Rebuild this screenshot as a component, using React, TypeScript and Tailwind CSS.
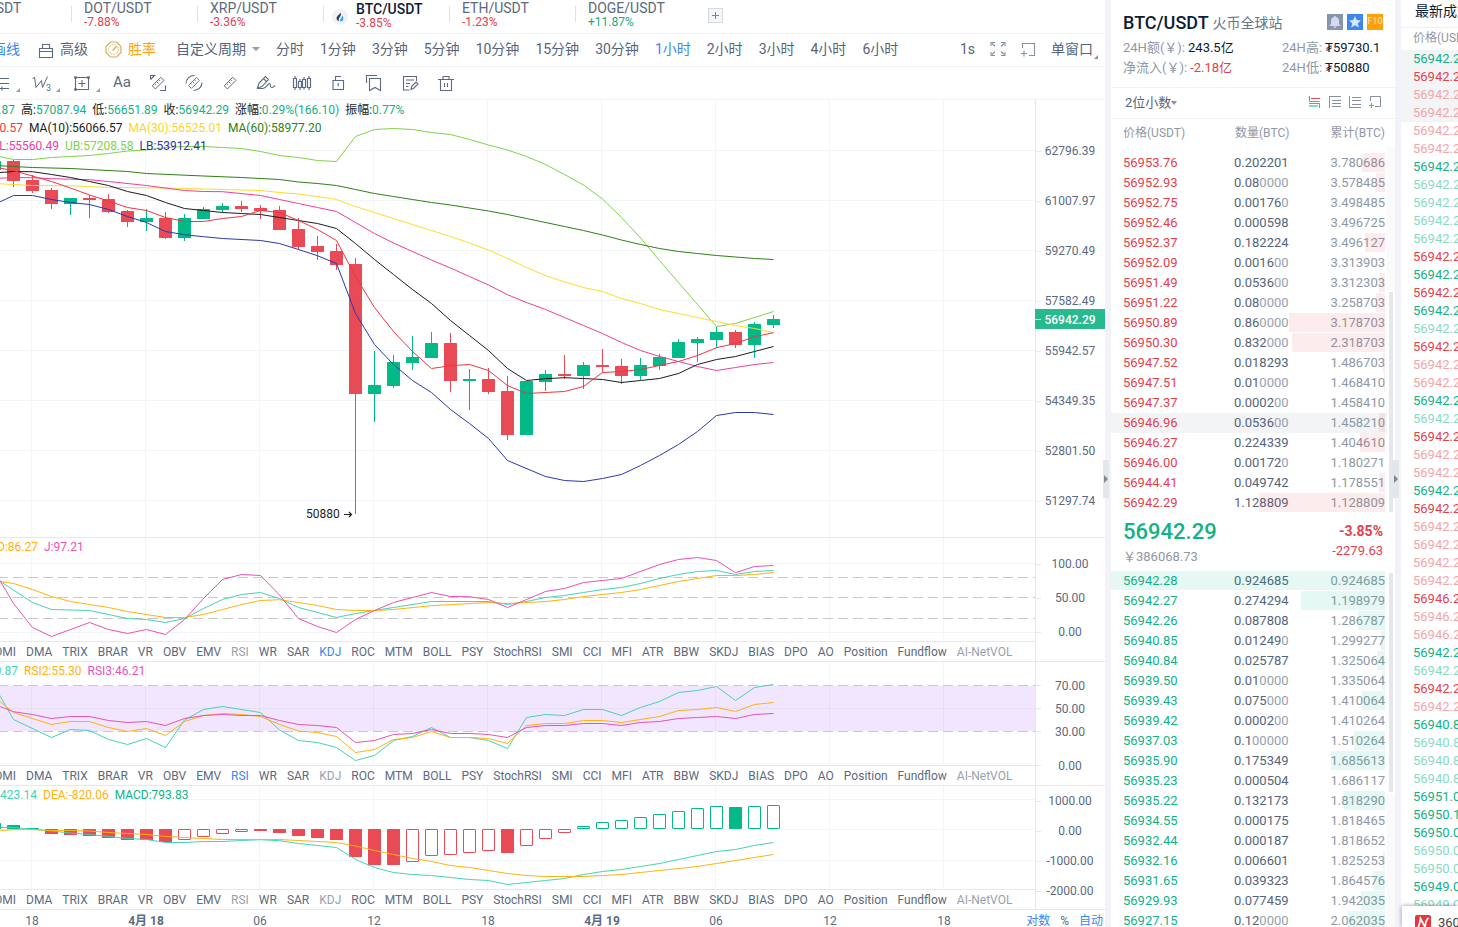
import React from 'react';

const GREEN = '#02b987';
const RED = '#e84b55';
const TEAL = '#45d3b5';
const ORANGE = '#ffb20d';
const PINK = '#e951b7';

const pairs = [
  { name: 'LTC/USDT', change: '-5.12%' },
  { name: 'DOT/USDT', change: '-7.88%' },
  { name: 'XRP/USDT', change: '-3.36%' },
  { name: 'BTC/USDT', change: '-3.85%', active: true },
  { name: 'ETH/USDT', change: '-1.23%' },
  { name: 'DOGE/USDT', change: '+11.87%' },
];

const periods = [
  '分时', '1分钟', '3分钟', '5分钟', '10分钟', '15分钟', '30分钟',
  '1小时', '2小时', '3小时', '4小时', '6小时',
];

const indicators = [
  'DMI', 'DMA', 'TRIX', 'BRAR', 'VR', 'OBV', 'EMV', 'RSI', 'WR', 'SAR', 'KDJ', 'ROC', 'MTM', 'BOLL', 'PSY',
  'StochRSI', 'SMI', 'CCI', 'MFI', 'ATR', 'BBW', 'SKDJ', 'BIAS', 'DPO', 'AO', 'Position', 'Fundflow', 'AI-NetVOL',
];

// up, wick top, body top, body bottom, wick bottom
const candles: [number, number, number, number, number][] = [
  [1, 161, 161, 170, 170],
  [0, 160, 161, 181, 187], [0, 175, 180, 191, 193], [0, 188, 190, 204, 209], [1, 198, 198, 204, 215],
  [0, 195, 198, 200, 218], [0, 194, 199, 212, 213], [0, 210, 211, 222, 227], [1, 209, 218, 222, 231],
  [0, 212, 218, 238, 239], [1, 214, 218, 238, 241], [1, 207, 209, 219, 219], [1, 203, 206, 210, 212],
  [0, 201, 206, 209, 212], [0, 205, 208, 211, 219], [0, 206, 210, 230, 230], [0, 218, 229, 247, 249],
  [0, 236, 246, 252, 260], [0, 244, 251, 265, 270], [0, 258, 264, 394, 514], [1, 351, 385, 394, 422],
  [1, 355, 362, 386, 388], [1, 336, 357, 363, 370], [1, 332, 343, 358, 358], [0, 333, 343, 381, 392],
  [1, 369, 379, 381, 410], [0, 368, 379, 392, 394], [0, 376, 391, 435, 440], [1, 381, 381, 435, 435],
  [1, 370, 374, 382, 391], [0, 355, 374, 376, 379], [1, 362, 365, 376, 389], [0, 349, 365, 367, 373],
  [0, 359, 366, 376, 384], [1, 358, 365, 376, 380], [1, 354, 357, 366, 370], [1, 339, 342, 358, 358],
  [1, 337, 339, 343, 362], [1, 327, 332, 340, 348], [0, 330, 332, 345, 348], [1, 322, 324, 345, 358],
  [1, 315, 319, 325, 328],
];

const mainLines = [
  { color: '#7ed348', points: '-6,155.5 13,159.5 32,159.5 51,157.5 70,156.5 89,155.5 108,153.5 127,151 146,150 165,147.5 184,146.5 203,146.5 222,147.5 241,148.5 260,151.5 279,155.5 298,157.5 317,160.5 336,161.5 355,136.5 374,129.5 393,128.5 412,129.5 431,132.5 450,134.5 469,139.5 488,145 507,150 526,156.5 545,164.5 564,174.5 583,185 602,199 621,217.5 640,238 659,260.5 678,282.5 697,304.5 716,326.5 735,323.5 754,317.5 773,311.5' },
  { color: '#2f8014', points: '-6,165.5 13,166.5 32,167.5 70,168.5 127,171.5 146,173.5 203,176 241,177.5 279,179.5 298,182 317,183.5 336,185.5 355,189.5 374,193.5 393,196.5 412,199.5 431,202.5 450,205 488,211 507,214.5 526,218.5 564,226.5 583,230.5 602,235 621,240 640,244.5 659,248.5 678,251.5 697,253.5 716,255.5 735,257 754,258.5 773,259.5' },
  { color: '#fddc2c', points: '-6,183.5 13,184.5 32,185.5 70,185.7 108,187.5 146,187.7 184,188.5 222,189.5 260,190.5 279,192.5 298,194 317,196.5 336,199.5 355,206.5 374,212.5 393,218.5 412,224.5 431,230.5 450,236.5 469,243 488,250 507,258.5 526,267.5 545,275.5 564,282 583,287.5 602,291.5 621,298.5 640,303.5 659,309.5 678,313.5 697,317.5 716,321.5 735,325.5 754,328.5 773,332.5' },
  { color: '#ec409e', points: '-6,178.5 13,177.5 32,177.7 51,178.7 89,179.7 108,181.5 146,185.5 184,190.5 203,191.5 222,191.7 260,195.5 279,199.5 298,203.5 317,207.5 336,211.5 355,222.5 374,233.5 393,243 412,251.5 431,260 450,268 469,276.5 488,285 507,294.7 526,302.5 545,309.5 564,317.5 583,325.5 602,333.5 621,342.5 640,350.5 659,356.5 678,361.5 697,366.5 716,370.5 735,367.5 754,364.5 773,362.5' },
  { color: '#1c1c1c', points: '-6,173 13,171.5 32,171.7 51,174.5 70,177.5 89,181.5 108,185.5 127,191.5 146,195.5 165,202.5 184,208.5 203,210.5 222,212.5 241,213.5 260,214.5 279,217.5 298,220.5 317,223.5 336,228.5 355,243.5 374,259.5 393,274.5 412,289.5 431,303.5 450,320.5 469,335.5 488,350.5 507,368.5 526,380.5 545,378.7 564,377.7 583,378.5 602,379.5 621,382.5 640,380.5 659,378.5 678,373.5 697,364.5 716,359.5 735,356.5 754,351.5 773,346.5' },
  { color: '#f3343f', points: '-6,167 13,170.7 32,176 51,181.5 70,188 89,195 108,201 127,207.5 146,210.5 165,217.5 184,221.5 203,221.5 222,218.5 241,216.5 260,210.5 279,212.5 298,220.5 317,229.5 336,240.5 355,276.5 374,307.5 393,331.5 412,351.5 431,368.5 450,365.7 469,364.5 488,370.5 507,385.5 526,393.5 564,391.5 583,386.5 602,372.5 621,371.5 640,369.5 659,365.5 678,361.5 697,355.5 716,347.7 735,343.5 754,336.7 773,332.7' },
  { color: '#2b39a8', points: '-6,204.5 13,195.5 32,195.5 51,199.5 70,202.5 89,204.5 108,209.5 127,216.5 146,222.5 165,231.5 184,234.7 203,236.7 222,238.5 260,240.5 279,243.5 298,249.5 317,255.7 336,263.5 355,313.5 374,344.5 393,364.5 412,380.5 431,392.5 450,409.5 469,423.5 488,438.5 507,460.5 545,476.5 564,480.5 583,481.5 602,478.5 621,474.5 640,465.5 659,455.5 678,444.5 697,431.5 716,415.5 735,412.5 754,412.5 773,414.5' },
];

const kdjLines = [
  { color: TEAL, points: '-6,575 0,581.5 13,590 32,602.5 51,609.5 89,610.5 127,618.5 146,619.5 165,622.5 184,618.5 203,608.5 222,599.5 241,594.5 260,592.5 279,598.5 298,607.5 336,617.5 355,613.5 374,610.5 393,607.5 431,601.5 488,601.5 507,604.5 526,601.5 545,597.5 564,595.5 583,592.5 602,589.5 621,587.5 640,583.5 659,578.5 678,574.5 697,571.5 716,570.5 735,574.5 754,571.5 773,570.5' },
  { color: ORANGE, points: '-6,581.5 0,581.7 13,583.5 32,589.5 51,596.5 70,601.5 89,604.5 108,607.5 127,611.5 146,614.5 165,617.5 184,617.5 203,614.5 222,609.5 241,604.5 260,600.5 279,599.7 298,602.5 317,605.5 336,609.5 355,610.5 374,610.5 393,609.5 431,605.7 488,602.5 507,603.5 545,601.5 564,599.5 583,596.5 602,594.5 621,592.5 640,589.5 659,585.5 678,581.5 697,578.5 716,575.5 735,575.5 754,574.5 773,572.5' },
  { color: PINK, points: '-6,572 0,581.5 13,603.5 32,627.5 51,636.5 89,622.5 108,629.5 127,633.5 146,629.5 165,634.5 184,619.5 203,598.5 222,579.5 241,574.5 260,575.5 279,595 298,618.5 317,626.5 336,632.5 355,619.5 374,610.5 393,602.5 412,597.5 431,592.5 450,596.5 469,596.7 488,599.5 507,607.5 526,599.5 545,591.5 564,588.5 583,582.5 602,580.5 621,578.5 640,571.5 659,564.5 678,559.5 697,557.5 716,560.5 735,572.7 754,566.5 773,565.5' },
];

const rsiLines = [
  { color: TEAL, points: '-6,686 0,696.7 13,719.5 51,737.5 70,729.5 89,730.5 108,739.5 127,744.5 146,738.5 165,747.5 184,720 203,709.5 222,706.5 260,712.5 279,730 298,740.5 317,742.5 336,747.5 355,760.5 374,755.5 393,740.5 412,736.5 431,727.5 450,737.5 469,737.5 488,740.5 507,748.5 526,717.5 545,714.5 564,715.5 583,709.5 602,709.5 621,715.5 640,707.5 659,701.5 678,692.5 697,690.5 716,686.5 735,700.5 754,687.5 773,684.5' },
  { color: ORANGE, points: '-6,697 0,702 13,712.5 32,718.5 51,724.5 70,721.5 89,721.5 108,727.5 127,731.5 146,728.5 165,735.5 184,721.5 203,715.5 222,713.5 241,714.5 260,716.5 279,724.5 298,731 317,732.5 336,736.5 355,752.5 374,749.5 393,739.5 412,737.5 431,731.5 450,737.5 469,737.5 488,738.5 507,743.5 526,725.5 545,723.5 564,723.5 583,720.5 602,720.5 621,722.5 640,719.5 659,716.5 678,710.5 697,709.5 716,707.5 735,711.5 754,704.5 773,702.5' },
  { color: PINK, points: '-6,704.5 0,706.7 13,711.7 32,714.5 51,718.5 70,716.5 89,716.5 108,720.5 127,722.5 146,721.5 165,725.5 184,718.5 203,715.5 222,714.5 241,715.5 260,715.5 279,720.5 298,724.5 317,725.5 336,727.5 355,742.5 374,740.5 393,734.5 412,733.5 431,729.5 450,733.5 469,733.5 488,734.5 507,737.5 526,727.5 545,725.5 564,725.5 583,723.5 602,723.5 621,725.5 640,722.5 659,721.5 678,718.5 697,717.5 716,716.5 735,718.5 754,714.5 773,713.5' },
];

const macdLines = [
  { color: TEAL, points: '-6,826.5 0,827.5 13,827.5 32,829.3 51,831 70,833 89,834.5 108,836.5 127,838.5 146,839.5 165,842.5 184,842.5 203,841.5 222,841.5 241,840.5 260,839.7 279,840.7 298,843.5 317,845.5 336,847.5 355,859.5 374,867.5 393,872.5 412,874.5 431,875.5 450,877.5 469,879.5 488,880.5 507,884.5 526,882.5 545,880.5 564,878.5 583,874.5 602,871.5 621,869.5 640,866.5 659,863.5 678,859.5 697,855.5 716,851.5 735,849.5 754,845.5 773,842.5' },
  { color: ORANGE, points: '-6,830.5 0,830.5 13,829.7 32,829.5 51,830.5 70,830.5 89,831 108,832.5 127,833.5 146,834.5 165,836.5 184,837.5 203,838.5 222,839.5 279,839.5 298,840.5 336,842.5 355,846 374,850.5 393,854.5 412,858.5 431,861.5 450,865.5 469,867.5 488,870.5 507,873.5 526,875.5 545,876.5 583,876.5 602,875.5 621,874.5 640,872.5 659,870.5 678,868.5 697,866.5 716,863.5 735,860.5 754,857.5 773,854.5' },
];

const macdBars: [number, boolean][] = [
  [6, false], [4, false], [1, false], [-5, false], [-6, false], [-7, false], [-9, false], [-11, false], [-11, false],
  [-13, false], [-11, true], [-8, true], [-5, true], [-3, true], [-2, false], [-4, false], [-7, false],
  [-9, false], [-11, false], [-28, false], [-36, false], [-36, false], [-33, true], [-27, true], [-26, true],
  [-24, true], [-22, true], [-24, false], [-17, true], [-10, true], [-4, true], [3, true], [7, true],
  [9, true], [12, true], [15, true], [18, true], [21, true], [23, true], [22, false], [23, true], [24, true],
];

const asks = [
  ['56953.76', '0.202201', '3.780686'],
  ['56952.93', '0.080000', '3.578485'],
  ['56952.75', '0.001760', '3.498485'],
  ['56952.46', '0.000598', '3.496725'],
  ['56952.37', '0.182224', '3.496127'],
  ['56952.09', '0.001600', '3.313903'],
  ['56951.49', '0.053600', '3.312303'],
  ['56951.22', '0.080000', '3.258703'],
  ['56950.89', '0.860000', '3.178703'],
  ['56950.30', '0.832000', '2.318703'],
  ['56947.52', '0.018293', '1.486703'],
  ['56947.51', '0.010000', '1.468410'],
  ['56947.37', '0.000200', '1.458410'],
  ['56946.96', '0.053600', '1.458210'],
  ['56946.27', '0.224339', '1.404610'],
  ['56946.00', '0.001720', '1.180271'],
  ['56944.41', '0.049742', '1.178551'],
  ['56942.29', '1.128809', '1.128809'],
];

const bids = [
  ['56942.28', '0.924685', '0.924685'],
  ['56942.27', '0.274294', '1.198979'],
  ['56942.26', '0.087808', '1.286787'],
  ['56940.85', '0.012490', '1.299277'],
  ['56940.84', '0.025787', '1.325064'],
  ['56939.50', '0.010000', '1.335064'],
  ['56939.43', '0.075000', '1.410064'],
  ['56939.42', '0.000200', '1.410264'],
  ['56937.03', '0.100000', '1.510264'],
  ['56935.90', '0.175349', '1.685613'],
  ['56935.23', '0.000504', '1.686117'],
  ['56935.22', '0.132173', '1.818290'],
  ['56934.55', '0.000175', '1.818465'],
  ['56932.44', '0.000187', '1.818652'],
  ['56932.16', '0.006601', '1.825253'],
  ['56931.65', '0.039323', '1.864576'],
  ['56929.93', '0.077459', '1.942035'],
  ['56927.15', '0.120000', '2.062035'],
];

// G / R are fresh trades, g / r are repeated at the same price
const trades: [string, string][] = [
  ['56942.2', 'GRrrrrGggggRGRGgRrrGgRrrGRrrrr'],
  ['56946.2', 'Rrr'],
  ['56942.2', 'GgRr'],
  ['56940.8', 'Gggg'],
  ['56951.0', 'G'],
  ['56950.1', 'G'],
  ['56950.0', 'Ggg'],
  ['56949.0', 'Gg'],
];

const tradeColors: Record<string, string> = {
  G: 'text-[#10b286]',
  R: 'text-[#e5404b]',
  g: 'text-[#86dcc3]',
  r: 'text-[#f3a5aa]',
};

const gridX = [31, 145, 259, 373, 487, 601, 715, 829, 943];

const Grid = ({ top, height, rows }: { top: number; height: number; rows: number[] }) => (
  <g fill="#f1f5f8">
    {gridX.map((x) => (
      <rect key={x} x={x} y={top} width="1" height={height} />
    ))}
    {rows.map((y) => (
      <rect key={y} x="0" y={y} width="1035" height="1" />
    ))}
  </g>
);

const Dashes = ({ rows }: { rows: number[] }) => (
  <g stroke="#c9c9c9" strokeDasharray="10 5">
    {rows.map((y) => (
      <line key={y} x1="-2" x2="1035" y1={y + 0.5} y2={y + 0.5} />
    ))}
  </g>
);

const Lines = ({ lines }: { lines: { color: string; points: string }[] }) => (
  <g fill="none" strokeWidth="1" strokeLinejoin="round">
    {lines.map((line) => (
      <polyline key={line.color} points={line.points} stroke={line.color} transform="translate(0.5 0)" />
    ))}
  </g>
);

const Legend = ({ items }: { items: { text: string; color: string; first?: string }[] }) => (
  <div className="flex h-[18px] items-center gap-[6px] whitespace-nowrap">
    {items.map((item) => (
      <span key={item.text} className={`${item.color} ${item.first ? `flex justify-end ${item.first}` : ''}`}>
        {item.text}
      </span>
    ))}
  </div>
);

const AxisLabel = ({ text, height }: { text: string; height: string }) => (
  <div className={`flex items-center ${height}`}>
    <span className="h-px w-[5px] bg-[#e6e9ec]" />
    <span className="flex-1 pr-[6px] text-center">{text}</span>
  </div>
);

const IndicatorTabs = ({ active, used }: { active?: string; used: string[] }) => (
  <nav className="flex h-[20px] items-center gap-[10px] overflow-hidden border-t border-[#e6e8eb] whitespace-nowrap">
    {indicators.map((name, i) => (
      <button
        key={name}
        className={`${i === 0 ? 'flex w-4 justify-end' : ''} ${
          name === active ? 'text-[#3c86ee]' : used.includes(name) ? 'text-[#98a1ae]' : 'text-[#5b6a80]'
        }`}
      >
        {name}
      </button>
    ))}
  </nav>
);

const Icon = ({ children }: { children: React.ReactNode }) => (
  <svg className="h-[18px] w-[18px]" viewBox="0 0 18 18" fill="none" stroke="#5b6a80" strokeWidth="1.1">
    {children}
  </svg>
);

const ruler = <path d="M2.500 12 12 2.500 15.500 6 6 15.500ZM5 9.500l1.500 1.500M7.200 7.300l2.200 2.200M9.400 5.100l1.500 1.500" />;

const drawTools = [
  {
    name: '线段',
    more: true,
    icon: <Icon><path d="M0 4.5h16M0 9.5h16M0 14.5h16M5 2.5v4M9 12.5v4" /></Icon>,
  },
  {
    name: '波浪',
    more: true,
    icon: (
      <svg className="h-[18px] w-5" viewBox="0 0 20 18" fill="none" stroke="#5b6a80" strokeWidth="1">
        <path d="M.5 5 2.500 3 4 13.500 9.500 6.500 10.500 13.500 15.500 2.500" />
        <text x="14" y="16.500" fontSize="9" fill="#5b6a80" stroke="none">3</text>
      </svg>
    ),
  },
  {
    name: '图形',
    more: true,
    icon: (
      <Icon>
        <path d="M2.500 3.500h13v12h-13zM9 6v7M5.500 9.500h7" />
        <path d="M1.500 2.500h2v2h-2zM14.500 2.500h2v2h-2zM1.500 14.500h2v2h-2z" fill="#5b6a80" strokeWidth="0.5" />
      </Icon>
    ),
  },
  { name: '文字', icon: <span className="text-[15px] text-[#5b6a80]">Aa</span> },
  {
    name: '测量',
    icon: <Icon><g transform="translate(1 1) scale(.9)">{ruler}</g><path d="M1.500 5.500V1.500H6.500M1.500 5.500 5.500 1.500M16.500 11.500v5H11" /></Icon>,
  },
  {
    name: '区间统计',
    icon: <Icon><g transform="translate(1.5 1.5) scale(.83)">{ruler}</g><path d="M1 9.500C1 5 4.500 1.500 9.500 1.500M17 8.500C17 13 13.500 16.500 8.500 16.500" /></Icon>,
  },
  { name: '尺子', icon: <Icon><g transform="translate(1 1) scale(.9)">{ruler}</g></Icon> },
  {
    name: '画笔',
    icon: (
      <svg className="h-[18px] w-5" viewBox="0 0 20 18" fill="none" stroke="#5b6a80" strokeWidth="1.1">
        <path d="M1.500 14 3 9 9.500 2.500 12.500 5.500 6 12.500ZM7.500 4.500 10.500 7.500M1 14.500h6c3 0 5-5 6.500-5s0 4 2 4 2.500-1 3.500-2" />
      </svg>
    ),
  },
  {
    name: 'K线形态',
    icon: (
      <svg className="h-[18px] w-5" viewBox="0 0 20 18" fill="none" stroke="#5b6a80" strokeWidth="1.2">
        <path d="M1.500 4.500h3v9h-3zM3 2v2.500M3 13.500V16M6.500 7.500h3v6h-3zM8 5v2.500M8 13.500V16M10.500 5.500h3v8h-3zM12 3v2.500M12 13.500v2M15.500 4.500h3v9h-3zM17 2v2.500M17 13.500V16" />
      </svg>
    ),
  },
  { name: '锁定', icon: <Icon><path d="M4 6.500h10.500v9H4zM6.500 6.500v-4h5.500M9.200 9v3.500" /></Icon> },
  { name: '收藏', icon: <Icon><path d="M1.500 9V1.500H12M4.500 4.500h11v12l-5.500-3-5.500 3z" /></Icon> },
  { name: '备注', icon: <Icon><path d="M8.500 16h-6V2.500h13V7M5 6h8M5 9.500h4M5 12.500h2.500M10 15.500l.5-3L15 8l2 2-4.500 4.500z" /></Icon> },
  { name: '删除', icon: <Icon><path d="M1 5.500h16M6 5.500v-3h6v3M3.500 5.500v11h11v-11M7.500 9v4M10.500 9v4" /></Icon> },
];

const Header = () => (
  <header>
    {/* Pair tabs */}
    <div className="-ml-[55px] flex h-[34px] border-b border-[#eff1f3]">
      {pairs.map((pair) => (
        <a key={pair.name} href={`#${pair.name}`} className="relative flex w-[126px] items-center">
          <span className="absolute top-[6px] left-0 h-4 w-px bg-[#dfe3e8]" />
          {pair.active && (
            <svg className="ml-[9px] h-4 w-4" viewBox="0 0 16 16">
              <circle cx="8" cy="8" r="8" fill="#f1f2f4" />
              <path d="M8 3.500C10 5.500 8.500 7 7.300 8.700 6.500 10 6.500 11 7.200 12.300 3.500 11 4.300 7.500 6.500 6 7.500 5.200 8 4.500 8 3.500Z" fill="#2f3a66" />
              <path d="M10.300 6.500C12 8.500 12 12 8.500 12.500 7 11 9.800 9.500 10.300 6.500Z" fill="#2ba3ea" />
            </svg>
          )}
          <span className={`flex flex-col ${pair.active ? 'ml-2' : 'ml-[13px]'}`}>
            <span
              className={`text-sm ${
                pair.active ? 'leading-4 font-medium text-[#0b1d38]' : 'leading-[14px] text-[#5b6a80]'
              }`}
            >
              {pair.name}
            </span>
            <span
              className={`text-xs ${pair.active ? 'pb-[3px] leading-3' : 'pb-[3px] leading-[14px]'} ${
                pair.change.startsWith('+') ? 'text-[#12ad80]' : 'text-[#e5404b]'
              }`}
            >
              {pair.change}
            </span>
          </span>
        </a>
      ))}
      <button
        aria-label="添加"
        className="mt-2 ml-[7px] flex h-[15px] w-[15px] items-center justify-center border border-[#d5dadf] bg-[#f4f6f8]"
      >
        <svg className="h-[7px] w-[7px]" viewBox="0 0 7 7" fill="#7d8896">
          <path d="M3 0h1v7H3zM0 3h7v1H0z" />
        </svg>
      </button>
    </div>

    {/* Periods */}
    <div className="flex h-[33px] items-center border-b border-[#eff1f3] pb-[2px] text-sm whitespace-nowrap text-[#56647a]">
      <button className="flex w-5 justify-end text-[#3c86ee]">画线</button>
      <button className="ml-[18px] flex items-center gap-[6px]">
        <svg className="mt-1 h-4 w-4" viewBox="0 0 16 16" fill="none" stroke="#5b6a80" strokeWidth="1.1">
          <path d="M1.500 5.500h13v9h-13zM1.500 8.500h13M4.500 5.500v-4h7v4" />
        </svg>
        高级
      </button>
      <button className="ml-[17px] flex items-center gap-[6px] text-[#ffa40f]">
        <svg className="h-[17px] w-[17px]" viewBox="0 0 17 17" fill="none" stroke="#e0ad5b" strokeWidth="1.200">
          <path d="M5.500 1h6L16 5.500v6L11.500 16h-6L1 11.500v-6z" />
          <circle cx="8.500" cy="8.500" r="5" strokeWidth="0.8" strokeDasharray="2 1" />
          <path d="M7.500 9.500 11.500 5.500" strokeWidth="1.500" />
        </svg>
        胜率
      </button>
      <button className="ml-5 flex items-center gap-[6px]">
        自定义周期
        <svg className="h-1 w-2" viewBox="0 0 8 4" fill="#929ba8"><path d="M0 0h8L4 4z" /></svg>
      </button>
      <div className="ml-4 flex gap-4">
        {periods.map((period) => (
          <button key={period} className={period === '1小时' ? 'text-[#3c86ee]' : ''}>
            {period}
          </button>
        ))}
      </div>
      <div className="ml-auto flex items-center gap-[15px]">
        <button>1s</button>
        <button aria-label="全屏">
          <svg className="h-4 w-4" viewBox="0 0 16 16" fill="none" stroke="#8590a0" strokeWidth="1.1">
            <path d="M1 5V1.500h4M2 2.500l3 3M11 1.500h4V5M14 2.500l-3 3M1 11v3.500h4M2 13.500l3-3M11 14.500h4V11M14 13.500l-3-3" />
          </svg>
        </button>
        <button aria-label="新窗口">
          <svg className="h-[15px] w-[15px]" viewBox="0 0 15 15" fill="none" stroke="#8590a0" strokeWidth="1.1">
            <path d="M1.500 6V1.500h12v12H8M0 11.500h6M3 8.500v6" />
          </svg>
        </button>
        <button className="relative pr-[12px]">
          单窗口
          <span className="absolute right-[7px] bottom-0 border-b-4 border-l-4 border-b-[#8590a0] border-l-transparent" />
        </button>
      </div>
    </div>

    {/* Drawing tools */}
    <div className="-ml-4 flex h-[33px] items-center border-b border-[#eff1f3]">
      {drawTools.map((tool) => (
        <button key={tool.name} aria-label={tool.name} className={`relative flex h-8 ${tool.more ? 'w-10' : 'w-9'}`}>
          <span className="flex w-9 items-center justify-center self-center">{tool.icon}</span>
          {tool.more && (
            <span className="absolute right-1 bottom-[7px] border-b-4 border-l-4 border-b-[#929ba8] border-l-transparent" />
          )}
        </button>
      ))}
    </div>
  </header>
);

const PriceChart = () => (
  <section className="flex min-h-0 flex-1 overflow-hidden border-b border-[#e6e8eb]">
    <div className="relative min-w-0 flex-1">
      <svg className="h-[437px] w-full" viewBox="0 100 1035 437" preserveAspectRatio="none">
        <Grid top={100} height={437} rows={[150, 200, 250, 300, 350, 400, 450, 500]} />
        {candles.map(([up, high, top, bottom, low], i) => (
          <g key={i} fill={up ? GREEN : RED}>
            <rect x={-6 + i * 19} y={high} width="1" height={low - high} />
            <rect x={-12 + i * 19} y={top} width="13" height={bottom - top} rx="0.5" />
          </g>
        ))}
        <Lines lines={mainLines} />
        <text x="306" y="518" fontSize="12" fill="#222">50880</text>
        <path d="M344 514.500h7.500M349 512l2.500 2.500-2.500 2.500" stroke="#222" strokeWidth="1.2" fill="none" />
      </svg>
      <div className="absolute top-px left-0">
        <div className="flex h-[18px] items-center gap-[6px] whitespace-nowrap text-[#222]">
          <span className="flex w-[15px] justify-end"><span>开:<b className="font-normal text-[#10b286]">56775.87</b></span></span>
          {[
            ['高', '57087.94'], ['低', '56651.89'], ['收', '56942.29'], ['涨幅', '0.29%(166.10)'], ['振幅', '0.77%'],
          ].map(([label, value]) => (
            <span key={label}>{label}:<b className="font-normal text-[#10b286]">{value}</b></span>
          ))}
        </div>
        <Legend
          items={[
            { text: 'MA(5):56560.57', color: 'text-[#f3343f]', first: 'w-[23px]' },
            { text: 'MA(10):56066.57', color: 'text-[#1c1c1c]' },
            { text: 'MA(30):56525.01', color: 'text-[#fdd61a]' },
            { text: 'MA(60):58977.20', color: 'text-[#2f8014]' },
          ]}
        />
        <Legend
          items={[
            { text: 'BOLL:55560.49', color: 'text-[#ec409e]', first: 'w-[59px]' },
            { text: 'UB:57208.58', color: 'text-[#7ed348]' },
            { text: 'LB:53912.41', color: 'text-[#2b39a8]' },
          ]}
        />
      </div>
    </div>
    <div className="relative w-[70px] border-l border-[#e6e8eb] pt-[26px]">
      {['62796.39', '61007.97', '59270.49', '57582.49', '55942.57', '54349.35', '52801.50', '51297.74'].map((price) => (
        <AxisLabel key={price} text={price} height="h-[50px]" />
      ))}
      <div className="absolute top-[209px] right-0 -left-px flex h-5 items-center bg-[#29b98f] pt-px text-white">
        <span className="h-px w-[6px] bg-white/70" />
        <span className="flex-1 pr-[6px] text-center font-medium">56942.29</span>
      </div>
    </div>
  </section>
);

const IndicatorPanel = ({
  top, legend, active, used, axis, children,
}: {
  top: number;
  legend: React.ReactNode;
  active?: string;
  used: string[];
  axis: React.ReactNode;
  children: React.ReactNode;
}) => (
  <section className="flex h-[124px] border-b border-[#e6e8eb]">
    <div className="relative min-w-0 flex-1">
      <svg className="h-[103px] w-full" viewBox={`0 ${top} 1035 103`} preserveAspectRatio="none">
        {children}
      </svg>
      <div className="absolute top-0 left-0">{legend}</div>
      <IndicatorTabs active={active} used={used} />
    </div>
    <div className="w-[70px] border-l border-[#e6e8eb]">{axis}</div>
  </section>
);

const used = ['RSI', 'KDJ', 'AI-NetVOL'];

const Indicators = () => (
  <>
    <IndicatorPanel
      top={538}
      active="KDJ"
      used={used}
      legend={
        <Legend
          items={[
            { text: 'D:86.27', color: 'text-[#ffb20d]', first: 'w-[38px]' },
            { text: 'J:97.21', color: 'text-[#e951b7]' },
          ]}
        />
      }
      axis={
        <div className="pt-[9px]">
          {['100.00', '50.00', '0.00'].map((v) => <AxisLabel key={v} text={v} height="h-[34px]" />)}
        </div>
      }
    >
      <Grid top={538} height={103} rows={[563, 632]} />
      <Dashes rows={[577, 597, 618]} />
      <Lines lines={kdjLines} />
    </IndicatorPanel>

    <IndicatorPanel
      top={662}
      active="RSI"
      used={used}
      legend={
        <Legend
          items={[
            { text: 'RSI1:70.87', color: 'text-[#45d3b5]', first: 'w-[18px]' },
            { text: 'RSI2:55.30', color: 'text-[#ffb20d]' },
            { text: 'RSI3:46.21', color: 'text-[#e951b7]' },
          ]}
        />
      }
      axis={
        <div className="pt-3">
          {['70.00', '50.00', '30.00'].map((v) => <AxisLabel key={v} text={v} height="h-[23px]" />)}
          <div className="pt-[11px]"><AxisLabel text="0.00" height="h-[23px]" /></div>
        </div>
      }
    >
      <Grid top={662} height={103} rows={[708]} />
      <rect x="0" y="686" width="1035" height="45" fill="#a64df5" fillOpacity="0.14" />
      <Dashes rows={[685, 731]} />
      <Lines lines={rsiLines} />
    </IndicatorPanel>

    <IndicatorPanel
      top={786}
      used={used}
      legend={
        <Legend
          items={[
            { text: 'DIF:-423.14', color: 'text-[#45d3b5]', first: 'w-[37px]' },
            { text: 'DEA:-820.06', color: 'text-[#ffb20d]' },
            { text: 'MACD:793.83', color: 'text-[#10b286]' },
          ]}
        />
      }
      axis={
        <div>
          {['1000.00', '0.00', '-1000.00', '-2000.00'].map((v) => <AxisLabel key={v} text={v} height="h-[30px]" />)}
        </div>
      }
    >
      <Grid top={786} height={103} rows={[799, 829, 860]} />
      {macdBars.map(([value, hollow], i) => {
        const color = value > 0 ? GREEN : RED;
        const inset = hollow ? 0.5 : 0;
        return (
          <rect
            key={i}
            x={-12 + i * 19 + inset}
            y={(value > 0 ? 829 - value : 829) + inset}
            width={13 - inset * 2}
            height={Math.abs(value) - inset * 2}
            fill={hollow ? '#fff' : color}
            stroke={hollow ? color : 'none'}
            rx="0.5"
          />
        );
      })}
      <Lines lines={macdLines} />
    </IndicatorPanel>
  </>
);

const TimeAxis = () => (
  <footer className="flex h-[17px] text-xs leading-[22px] whitespace-nowrap text-[#5b6a80]">
    <div className="-ml-[25px] flex">
      {['18', '4月 18', '06', '12', '18', '4月 19', '06', '12', '18'].map((label, i) => (
        <span key={i} className={`w-[114px] text-center ${label.includes('月') ? 'font-bold' : ''}`}>
          {label}
        </span>
      ))}
    </div>
    <div className="ml-auto flex gap-[10px] pr-[2px]">
      <button className="text-[#3c86ee]">对数</button>
      <button>%</button>
      <button className="text-[#3c86ee]">自动</button>
    </div>
  </footer>
);

const Handle = () => (
  <button
    aria-label="收起"
    className="absolute top-[460px] -left-[2px] z-10 flex h-[38px] w-[6px] items-center justify-center bg-[#e3e7eb]"
  >
    <svg className="h-2 w-1" viewBox="0 0 4 8" fill="#7d8896"><path d="M0 0l4 4-4 4z" /></svg>
  </button>
);

const Amount = ({ value }: { value: string }) => {
  const head = value.replace(/0+$/, '');
  return (
    <>
      {head}
      <span className="text-[#98a1ae]">{value.slice(head.length)}</span>
    </>
  );
};

const BookTable = ({ rows, side, scale }: { rows: string[][]; side: 'ask' | 'bid'; scale: number }) => (
  <table className="w-full table-fixed text-[13px] leading-5">
    <tbody>
      {rows.map(([price, amount, total]) => (
        <tr key={price} className={`relative h-5 ${price === '56946.96' ? 'bg-[#f2f4f6]' : ''}`}>
          <td className={`w-[123px] p-0 pl-3 ${side === 'ask' ? 'text-[#e5404b]' : 'text-[#10b286]'}`}>{price}</td>
          <td className="p-0 text-[#55647b]"><Amount value={amount} /></td>
          <td className="p-0 pr-[2px] text-right text-[#8f98a5]">
            {total}
            <span
              className={`absolute top-0 right-[2px] h-[19px] max-w-[274px] ${
                side === 'ask' ? 'bg-[#f0414e]/10' : 'bg-[#02b987]/10'
              }`}
              style={{ width: Math.round(Number(amount) * scale) }}
            />
          </td>
        </tr>
      ))}
    </tbody>
  </table>
);

const OrderBook = () => (
  <aside className="relative flex w-[284px] shrink-0 flex-col overflow-hidden bg-white">
    <div className="h-[88px] border-b border-[#eff1f3] pt-[11px] pr-3 pl-3">
      <div className="flex h-[22px] items-center">
        <h1 className="text-[18px] font-medium text-[#0b1d38]">BTC/USDT</h1>
        <span className="ml-1 pt-[2px] text-sm text-[#68758a]">火币全球站</span>
        <div className="ml-auto flex gap-1">
          <button aria-label="提醒" className="flex h-4 w-4 items-center justify-center bg-[#8795a8]">
            <svg className="h-3 w-3" viewBox="0 0 12 12" fill="#d3daf2">
              <path d="M6 0a1 1 0 0 1 1 1c2 .500 3 2 3 4v3l1.500 1.500v.500H.500v-.500L2 8V5c0-2 1-3.500 3-4a1 1 0 0 1 1-1zM4.500 10.500h3a1.500 1.500 0 0 1-3 0z" />
            </svg>
          </button>
          <button aria-label="自选" className="flex h-4 w-4 items-center justify-center bg-[#3c86ee]">
            <svg className="h-3 w-3" viewBox="0 0 12 12" fill="#d6e6ff">
              <path d="M6 0l1.800 4 4.200.400-3.200 2.800 1 4.300L6 9.200l-3.800 2.300 1-4.300L0 4.400 4.200 4z" />
            </svg>
          </button>
          <button className="flex h-4 w-4 items-center justify-center bg-[#ff9f0a] text-[9px] text-[#ffe7c2]">F10</button>
        </div>
      </div>
      <dl className="mt-[5px] grid grid-cols-[159px_1fr] text-[13px] leading-5 whitespace-nowrap text-[#8f98a5]">
        <div className="flex gap-[3px]"><dt>24H额(￥):</dt><dd className="text-[#0b1d38]">243.5亿</dd></div>
        <div className="flex gap-[3px]"><dt>24H高:</dt><dd className="text-[#0b1d38]">₮59730.1</dd></div>
        <div className="flex gap-[3px]"><dt>净流入(￥):</dt><dd className="text-[#e5404b]">-2.18亿</dd></div>
        <div className="flex gap-[3px]"><dt>24H低:</dt><dd className="text-[#0b1d38]">₮50880</dd></div>
      </dl>
    </div>

    <div className="flex h-[31px] items-center justify-between border-b border-[#eff1f3] pr-[14px] pl-[14px]">
      <button className="flex items-center text-[13px] text-[#56647a]">
        2位小数
        <svg className="h-1 w-[6px]" viewBox="0 0 6 4" fill="#8590a0"><path d="M0 0h6L3 4z" /></svg>
      </button>
      <div className="flex gap-2 pb-[3px]">
        <button aria-label="买卖盘">
          <svg className="h-3 w-3" viewBox="0 0 12 12" fill="none">
            <path d="M.5 0v5.500H10.500M0 7.500h10.500v4.500" stroke="#8590a0" />
            <path d="M2 2.500h9" stroke={RED} /><path d="M0 10h9" stroke={GREEN} />
          </svg>
        </button>
        <button aria-label="卖盘">
          <svg className="h-3 w-3" viewBox="0 0 12 12" fill="none" stroke="#8590a0">
            <path d="M0 .5h12M.5 0v12M3 4.500h9M3 7.500h9M3 10.500h9" />
          </svg>
        </button>
        <button aria-label="买盘">
          <svg className="h-3 w-3" viewBox="0 0 12 12" fill="none" stroke="#8590a0">
            <path d="M0 11.500h12M.5 0v12M3 1.500h9M3 4.500h9M3 8.500h9" />
          </svg>
        </button>
        <button aria-label="新窗口">
          <svg className="h-3 w-3" viewBox="0 0 12 12" fill="none" stroke="#8590a0">
            <path d="M1.500 5V.5h10v10H6M0 9.500h5M2.500 7v5" />
          </svg>
        </button>
      </div>
    </div>

    <div className="grid h-[34px] grid-cols-[112px_1fr_1fr] pt-1 pr-[10px] pl-3 text-xs leading-5 text-[#8f98a5]">
      <span>价格(USDT)</span>
      <span>数量(BTC)</span>
      <span className="text-right">累计(BTC)</span>
    </div>

    <div className="relative pr-2">
      <BookTable rows={asks} side="ask" scale={112} />
      <span className="absolute -top-[6px] right-0 h-[143px] w-2 bg-[#fafafa]" />
      <span className="absolute top-[139px] right-[2px] h-[220px] w-1 bg-[#e4e8eb]" />
    </div>

    <div className="flex h-[58px] justify-between pt-[5px] pr-3 pl-3">
      <div>
        <div className="text-[22px] leading-[28px] font-medium text-[#10b286]">56942.29</div>
        <div className="text-[13px] leading-[22px] text-[#8f98a5]">￥386068.73</div>
      </div>
      <div className="text-right text-[#e5404b]">
        <div className="text-sm leading-[26px] font-bold">-3.85%</div>
        <div className="text-[13px] leading-[14px]">-2279.63</div>
      </div>
    </div>

    <div className="relative min-h-0 flex-1 pr-2">
      <BookTable rows={bids} side="bid" scale={307} />
      <span className="absolute top-[2px] right-[2px] h-[219px] w-1 bg-[#e4e8eb]" />
      <span className="absolute top-[223px] right-0 bottom-0 w-2 bg-[#fafafa]" />
    </div>
  </aside>
);

const Trades = () => (
  <aside className="w-[57px] shrink-0 overflow-hidden bg-white whitespace-nowrap">
    <h2 className="h-7 border-b border-[#eff1f3] pl-[14px] text-sm leading-[22px] text-[#0b1d38]">最新成交</h2>
    <div className="h-[22px] pl-3 text-xs leading-5 text-[#8f98a5]">价格(USDT)</div>
    <ul className="text-[13px] leading-[18px]">
      {trades.flatMap(([price, marks], group) =>
        marks.split('').map((mark, i) => (
          <li
            key={`${group}-${i}`}
            className={`h-[18px] pl-3 ${tradeColors[mark]} ${group === 0 && i < 4 ? 'bg-[#f2f4f6]' : ''}`}
          >
            {price}
          </li>
        )),
      )}
    </ul>
  </aside>
);

const App: React.FC = () => {
  return (
    <div className="relative flex h-screen overflow-hidden bg-[#f1f3f8] font-[Roboto,'Noto_Sans_CJK_SC',sans-serif]">
      <main className="flex min-w-0 flex-1 flex-col overflow-hidden bg-white text-xs text-[#5b6a80]">
        <Header />
        <PriceChart />
        <Indicators />
        <TimeAxis />
      </main>
      <div className="relative w-[6px] shrink-0"><Handle /></div>
      <OrderBook />
      <div className="relative w-[6px] shrink-0"><Handle /></div>
      <Trades />

      {/* Browser notification */}
      <div className="absolute right-0 bottom-0 flex h-[21px] w-14 gap-[7px] overflow-hidden bg-white pt-[9px] pl-[13px] shadow-[0_0_4px_rgba(0,0,0,0.45)]">
        <svg className="h-4 w-4 shrink-0" viewBox="0 0 16 16">
          <rect width="16" height="16" rx="2" fill="#e8363d" />
          <path d="M2.500 13C4.500 11 5 7 5.500 3.500L10 12C10.500 8 11 4.500 13.500 3" fill="none" stroke="#fff" strokeWidth="1.800" />
        </svg>
        <span className="text-[13px] leading-4 text-[#444]">360</span>
      </div>
    </div>
  );
};

export default App;
